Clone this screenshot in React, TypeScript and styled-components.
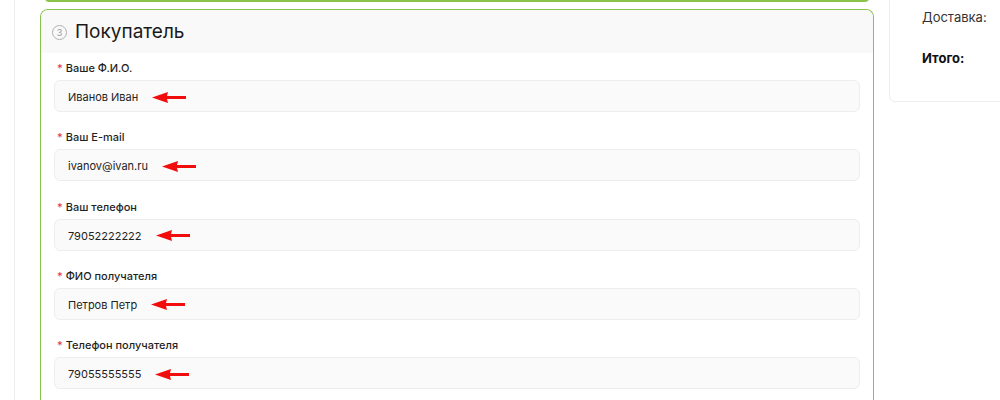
import React from 'react'
import styled, { createGlobalStyle } from 'styled-components'

const GlobalStyle = createGlobalStyle`
  html, body {
    margin: 0;
    padding: 0;
    background: #ffffff;
    overflow: hidden;
  }
  body {
    font-family: Inter, "Noto Sans", "Liberation Sans", sans-serif;
    color: #222222;
  }
`

const Page = styled.div`
  display: flex;
  align-items: flex-start;
  height: 400px;
  padding-left: 14px;
`

const MainColumn = styled.div`
  display: flex;
  flex-direction: column;
  align-self: stretch;
  width: 834px;
  padding-left: 25px;
  border-left: 1px solid #eeeeee;
  flex-shrink: 0;
`

const PrevCardEdge = styled.div`
  height: 2px;
  margin: -2px 5px 0;
  border-bottom: 2px solid #8bc34a;
  border-radius: 0 0 4px 4px;
`

const Card = styled.section`
  margin-top: 7px;
  border: 1px solid #8bc34a;
  border-bottom: none;
  border-radius: 8px 8px 0 0;
  background: #ffffff;
  overflow: hidden;
  flex: 1;
`

const CardHeader = styled.div`
  display: flex;
  align-items: center;
  gap: 8px;
  height: 43px;
  padding: 0 11px;
  background: #f9f9f9;
`

const StepNumber = styled.span`
  display: inline-flex;
  align-items: center;
  justify-content: center;
  width: 13px;
  height: 13px;
  border: 1px solid #b0b0b0;
  border-radius: 50%;
  font-size: 9px;
  color: #999999;
  margin-top: 1px;
`

const CardTitle = styled.h2`
  margin: 0;
  font-size: 19px;
  font-weight: 400;
  color: #1a1a1a;
`

const Fields = styled.div`
  display: flex;
  flex-direction: column;
  gap: 19.3px;
  padding: 9px 13px 0;
`

const Field = styled.div`
  display: flex;
  flex-direction: column;
  gap: 6px;
`

const Label = styled.label`
  font-size: 11px;
  font-weight: 500;
  color: #1f1f1f;
  padding-left: 3px;
  line-height: 12px;

  &::before {
    content: '*';
    color: #e53935;
    margin-right: 3px;
  }
`

const InputBox = styled.div`
  display: flex;
  align-items: center;
  height: 30px;
  padding: 0 13px;
  background: #fafafa;
  border: 1px solid #ededed;
  border-radius: 6px;
  font-size: 11px;
  color: #222222;
`

const Value = styled.span`
  margin-top: 2px;
`

const Arrow = styled.svg`
  margin-left: 14px;
  margin-top: 2px;
  flex-shrink: 0;
`

const Summary = styled.aside`
  margin-left: 15px;
  margin-top: -10px;
  width: 140px;
  flex-shrink: 0;
  padding: 19px 32px 28px;
  border: 1px solid #eeeeee;
  border-radius: 6px;
  background: #ffffff;
  display: flex;
  flex-direction: column;
  gap: 27px;
  box-sizing: border-box;
  height: 112px;
`

const SummaryRow = styled.div<{ $bold?: boolean }>`
  font-size: 13px;
  font-weight: ${p => (p.$bold ? 700 : 400)};
  color: ${p => (p.$bold ? '#111111' : '#333333')};
  line-height: 14px;
`

const RedArrow = () => (
  <Arrow width="34" height="11" viewBox="0 0 34 11">
    <polygon points="0,5.5 16,0 15,4 34,4 34,7 15,7 16,11" fill="#f20d0d" />
  </Arrow>
)

const fields = [
  { label: 'Ваше Ф.И.О.', value: 'Иванов Иван' },
  { label: 'Ваш E-mail', value: 'ivanov@ivan.ru' },
  { label: 'Ваш телефон', value: '79052222222' },
  { label: 'ФИО получателя', value: 'Петров Петр' },
  { label: 'Телефон получателя', value: '79055555555' },
]

const App: React.FC = () => {
  return (
    <>
      <GlobalStyle />
      <Page>
        <MainColumn>
          <PrevCardEdge />
          <Card>
            <CardHeader>
              <StepNumber>3</StepNumber>
              <CardTitle>Покупатель</CardTitle>
            </CardHeader>
            <Fields>
              {fields.map(f => (
                <Field key={f.label}>
                  <Label>{f.label}</Label>
                  <InputBox>
                    <Value>{f.value}</Value>
                    <RedArrow />
                  </InputBox>
                </Field>
              ))}
            </Fields>
          </Card>
        </MainColumn>
        <Summary>
          <SummaryRow>Доставка:</SummaryRow>
          <SummaryRow $bold>Итого:</SummaryRow>
        </Summary>
      </Page>
    </>
  )
}

export default App
